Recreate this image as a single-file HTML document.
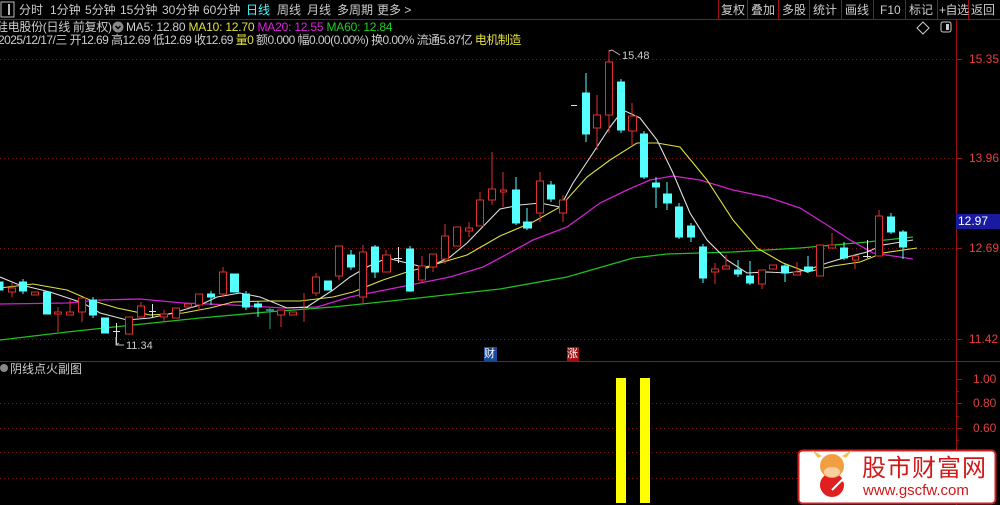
<!DOCTYPE html>
<html><head><meta charset="utf-8"><style>
*{margin:0;padding:0}
body{width:1000px;height:505px;background:#000;overflow:hidden;position:relative;font-family:"Liberation Sans","Noto Sans CJK SC",sans-serif;}
.t{position:absolute;white-space:nowrap;font-size:12px;line-height:14px}
</style></head><body>
<svg width="1000" height="505" style="position:absolute;left:0;top:0" xmlns="http://www.w3.org/2000/svg">
<line x1="0" y1="19.5" x2="1000" y2="19.5" stroke="#a01010"/>
<line x1="956.5" y1="20" x2="956.5" y2="505" stroke="#a01010"/>
<line x1="0" y1="361.5" x2="1000" y2="361.5" stroke="#a01010"/>
<rect x="1" y="2" width="13" height="15" fill="none" stroke="#bbb"/>
<line x1="9" y1="4" x2="9" y2="15" stroke="#bbb" stroke-width="2"/>
<g stroke="#a01010">
<line x1="718.5" y1="0" x2="718.5" y2="19"/><line x1="747.5" y1="0" x2="747.5" y2="19"/><line x1="778.5" y1="0" x2="778.5" y2="19"/><line x1="809.5" y1="0" x2="809.5" y2="19"/><line x1="841.5" y1="0" x2="841.5" y2="19"/><line x1="873.5" y1="0" x2="873.5" y2="19"/><line x1="905.5" y1="0" x2="905.5" y2="19"/><line x1="937.5" y1="0" x2="937.5" y2="19"/><line x1="968.5" y1="0" x2="968.5" y2="19"/>
</g>
<path d="M923 22 L929 28 L923 34 L917 28 Z" fill="none" stroke="#ccc"/>
<rect x="941" y="22" width="10" height="10" rx="2" fill="none" stroke="#ccc"/><rect x="946" y="24" width="3" height="6" fill="#ccc"/>
<g stroke="#7a1818" stroke-dasharray="1,3">
<line x1="0" y1="59.5" x2="956" y2="59.5"/><line x1="0" y1="158.5" x2="956" y2="158.5"/><line x1="0" y1="248.5" x2="956" y2="248.5"/><line x1="0" y1="339.5" x2="956" y2="339.5"/>
<line x1="0" y1="403.5" x2="956" y2="403.5"/><line x1="0" y1="428.5" x2="956" y2="428.5"/><line x1="0" y1="452.5" x2="956" y2="452.5"/><line x1="0" y1="478.5" x2="956" y2="478.5"/>
</g>
<g stroke="#a01010">
<line x1="956" y1="59.5" x2="962" y2="59.5"/><line x1="956" y1="158.5" x2="962" y2="158.5"/><line x1="956" y1="248.5" x2="962" y2="248.5"/><line x1="956" y1="339.5" x2="962" y2="339.5"/>
<line x1="956" y1="379.5" x2="962" y2="379.5"/><line x1="956" y1="403.5" x2="962" y2="403.5"/><line x1="956" y1="428.5" x2="962" y2="428.5"/><line x1="956" y1="391.5" x2="959" y2="391.5"/><line x1="956" y1="416.5" x2="959" y2="416.5"/><line x1="956" y1="440.5" x2="959" y2="440.5"/>
</g>
<polyline fill="none" stroke="#20c020" stroke-width="1.3" points="0,340 67,332 133,325 200,318 267,312 333,307 400,300 500,289 567,277 633,258 667,254 733,252 800,248 867,242 913,237"/>
<polyline fill="none" stroke="#d020d0" stroke-width="1.3" points="0,304 67,303 100,300 140,299 183,303 233,305 283,308 317,307 350,297 400,287 450,277 483,267 500,258 533,240 567,227 600,203 627,190 650,180 673,176 700,180 733,190 767,197 800,208 827,225 850,240 873,253 913,259"/>
<polyline fill="none" stroke="#e0e040" stroke-width="1.1" points="0,288 33,284 67,290 90,300 117,308 150,315 183,313 210,308 233,302 267,301 300,301 333,297 353,292 383,280 407,272 433,265 467,255 500,236 533,222 560,207 587,177 610,160 637,143 657,143 680,147 707,180 733,220 757,248 783,263 807,272 833,266 860,262 883,253 917,248"/>
<polyline fill="none" stroke="#e0e0e0" stroke-width="1.1" points="0,277 17,284 50,292 83,303 100,313 127,320 150,318 173,313 200,305 217,297 240,293 260,297 287,308 307,307 333,290 350,277 367,267 387,258 407,263 427,268 450,257 467,243 500,209 520,205 540,203 560,207 573,183 593,153 610,127 623,110 640,118 657,140 673,173 690,213 707,240 727,260 747,273 767,272 787,273 807,270 827,263 847,257 867,252 883,245 913,240"/>
<g stroke-width="1">
<g stroke="#54ffff" fill="#54ffff">
<rect x="0" y="282" width="3" height="8"/>
<rect x="19.5" y="282" width="7" height="9"/><line x1="23" y1="279" x2="23" y2="294"/>
<rect x="43.5" y="292" width="7" height="22"/>
<rect x="89.5" y="300" width="7" height="15"/><line x1="93" y1="297" x2="93" y2="318"/>
<rect x="101.5" y="318" width="7" height="15"/>
<rect x="207.5" y="294" width="7" height="3"/><line x1="211" y1="291" x2="211" y2="305"/>
<rect x="230.5" y="274" width="8" height="18"/>
<rect x="242.5" y="294" width="7" height="13"/><line x1="246" y1="291" x2="246" y2="310"/>
<rect x="254.5" y="304" width="7" height="3"/><line x1="258" y1="301" x2="258" y2="317"/>
<rect x="324.5" y="281" width="7" height="9"/>
<rect x="347.5" y="255" width="7" height="12"/><line x1="351" y1="250" x2="351" y2="270"/>
<rect x="371.5" y="247" width="7" height="25"/><line x1="375" y1="245" x2="375" y2="278"/>
<rect x="406.5" y="249" width="7" height="42"/><line x1="410" y1="246" x2="410" y2="292"/>
<rect x="512.5" y="190" width="7" height="33"/><line x1="516" y1="177" x2="516" y2="225"/>
<rect x="523.5" y="222" width="8" height="6"/><line x1="527" y1="208" x2="527" y2="230"/>
<rect x="547.5" y="185" width="7" height="14"/><line x1="551" y1="181" x2="551" y2="202"/>
<rect x="582.5" y="93" width="7" height="41"/><line x1="586" y1="73" x2="586" y2="142"/>
<rect x="617.5" y="82" width="7" height="48"/><line x1="621" y1="79" x2="621" y2="133"/>
<rect x="640.5" y="134" width="7" height="43"/><line x1="644" y1="131" x2="644" y2="179"/>
<rect x="652.5" y="183" width="7" height="4"/><line x1="656" y1="177" x2="656" y2="208"/>
<rect x="663.5" y="194" width="8" height="9"/><line x1="667" y1="182" x2="667" y2="210"/>
<rect x="675.5" y="207" width="7" height="30"/><line x1="679" y1="203" x2="679" y2="239"/>
<rect x="687.5" y="226" width="7" height="11"/><line x1="691" y1="223" x2="691" y2="242"/>
<rect x="699.5" y="247" width="7" height="31"/><line x1="703" y1="244" x2="703" y2="283"/>
<rect x="734.5" y="270" width="7" height="4"/><line x1="738" y1="260" x2="738" y2="277"/>
<rect x="746.5" y="276" width="7" height="7"/><line x1="750" y1="261" x2="750" y2="285"/>
<rect x="781.5" y="266" width="7" height="7"/><line x1="785" y1="263" x2="785" y2="282"/>
<rect x="804.5" y="267" width="8" height="4"/><line x1="808" y1="256" x2="808" y2="273"/>
<rect x="840.5" y="248" width="7" height="10"/><line x1="844" y1="242" x2="844" y2="260"/>
<rect x="887.5" y="217" width="7" height="15"/><line x1="891" y1="213" x2="891" y2="234"/>
<rect x="899.5" y="232" width="7" height="15"/><line x1="903" y1="230" x2="903" y2="259"/>
</g>
<g stroke="#e03030" fill="#000">
<rect x="8.5" y="288" width="7" height="4"/><line x1="12" y1="283" x2="12" y2="288"/><line x1="12" y1="292" x2="12" y2="297"/>
<rect x="31.5" y="292" width="7" height="3"/>
<rect x="54.5" y="312" width="7" height="2"/><line x1="58" y1="307" x2="58" y2="312"/><line x1="58" y1="314" x2="58" y2="332"/>
<rect x="66.5" y="312" width="7" height="3"/><line x1="70" y1="300" x2="70" y2="312"/>
<rect x="78.5" y="298" width="7" height="14"/><line x1="82" y1="312" x2="82" y2="322"/>
<rect x="125.5" y="317" width="7" height="17"/>
<rect x="137.5" y="306" width="7" height="11"/><line x1="141" y1="302" x2="141" y2="306"/>
<rect x="160.5" y="314" width="7" height="3"/><line x1="164" y1="310" x2="164" y2="314"/><line x1="164" y1="317" x2="164" y2="321"/>
<rect x="172.5" y="308" width="7" height="10"/>
<rect x="184.5" y="304" width="7" height="3"/>
<rect x="195.5" y="294" width="7" height="11"/><line x1="199" y1="305" x2="199" y2="311"/>
<rect x="219.5" y="272" width="7" height="22"/><line x1="223" y1="267" x2="223" y2="272"/><line x1="223" y1="294" x2="223" y2="297"/>
<rect x="277.5" y="310" width="7" height="5"/><line x1="281" y1="315" x2="281" y2="327"/>
<rect x="289.5" y="312" width="7" height="3"/>
<rect x="312.5" y="277" width="7" height="16"/><line x1="316" y1="273" x2="316" y2="277"/><line x1="316" y1="293" x2="316" y2="296"/>
<rect x="335.5" y="246" width="7" height="30"/><line x1="339" y1="276" x2="339" y2="280"/>
<rect x="359.5" y="252" width="7" height="45"/><line x1="363" y1="245" x2="363" y2="252"/><line x1="363" y1="297" x2="363" y2="303"/>
<rect x="382.5" y="255" width="8" height="17"/><line x1="386" y1="250" x2="386" y2="255"/>
<rect x="418.5" y="266" width="7" height="14"/><line x1="422" y1="256" x2="422" y2="266"/><line x1="422" y1="280" x2="422" y2="283"/>
<rect x="429.5" y="254" width="7" height="13"/><line x1="433" y1="267" x2="433" y2="272"/>
<rect x="441.5" y="236" width="7" height="23"/><line x1="445" y1="224" x2="445" y2="236"/><line x1="445" y1="259" x2="445" y2="264"/>
<rect x="453.5" y="227" width="7" height="19"/>
<rect x="465.5" y="228" width="7" height="3"/><line x1="469" y1="222" x2="469" y2="228"/><line x1="469" y1="231" x2="469" y2="237"/>
<rect x="476.5" y="200" width="7" height="26"/><line x1="480" y1="192" x2="480" y2="200"/>
<rect x="488.5" y="189" width="7" height="11"/><line x1="492" y1="152" x2="492" y2="189"/><line x1="492" y1="200" x2="492" y2="205"/>
<rect x="500.5" y="190" width="6" height="2"/><line x1="503" y1="172" x2="503" y2="190"/><line x1="503" y1="192" x2="503" y2="207"/>
<rect x="536.5" y="181" width="7" height="32"/><line x1="540" y1="172" x2="540" y2="181"/><line x1="540" y1="213" x2="540" y2="222"/>
<rect x="559.5" y="200" width="7" height="13"/><line x1="563" y1="195" x2="563" y2="200"/><line x1="563" y1="213" x2="563" y2="222"/>
<rect x="593.5" y="115" width="7" height="13"/><line x1="597" y1="95" x2="597" y2="115"/><line x1="597" y1="128" x2="597" y2="150"/>
<rect x="605.5" y="62" width="7" height="53"/><line x1="609" y1="50" x2="609" y2="62"/><line x1="609" y1="115" x2="609" y2="133"/>
<rect x="628.5" y="116" width="8" height="15"/><line x1="632" y1="103" x2="632" y2="116"/><line x1="632" y1="131" x2="632" y2="145"/>
<rect x="711.5" y="269" width="7" height="3"/><line x1="715" y1="263" x2="715" y2="269"/><line x1="715" y1="272" x2="715" y2="284"/>
<rect x="722.5" y="266" width="7" height="3"/><line x1="726" y1="255" x2="726" y2="266"/>
<rect x="758.5" y="270" width="7" height="14"/><line x1="762" y1="284" x2="762" y2="289"/>
<rect x="769.5" y="265" width="7" height="4"/>
<rect x="793.5" y="272" width="7" height="3"/><line x1="797" y1="262" x2="797" y2="272"/>
<rect x="816.5" y="245" width="7" height="31"/>
<rect x="828.5" y="245" width="7" height="3"/><line x1="832" y1="233" x2="832" y2="245"/>
<rect x="852.5" y="256" width="6" height="4"/><line x1="855" y1="260" x2="855" y2="269"/>
<rect x="875.5" y="216" width="7" height="40"/><line x1="879" y1="210" x2="879" y2="216"/>
</g>
<g stroke="#e0e0e0">
<line x1="113" y1="331.5" x2="120" y2="331.5"/><line x1="116.5" y1="323" x2="116.5" y2="345"/>
<line x1="149" y1="311.5" x2="156" y2="311.5"/><line x1="152.5" y1="304" x2="152.5" y2="317"/>
<line x1="394" y1="258.5" x2="402" y2="258.5"/><line x1="398.5" y1="247" x2="398.5" y2="263"/>
<line x1="571" y1="105.5" x2="577" y2="105.5"/>
<line x1="863" y1="256.5" x2="871" y2="256.5"/><line x1="867.5" y1="240" x2="867.5" y2="258"/>
</g>
<line x1="266" y1="310" x2="274" y2="310" stroke="#54ffff"/><line x1="270" y1="308" x2="270" y2="329" stroke="#30a080"/>
<line x1="300" y1="307.5" x2="308" y2="307.5" stroke="#e0e0e0"/><line x1="304" y1="293" x2="304" y2="322" stroke="#e03030"/>
</g>
<path d="M116 337 V345 H124 M116 345 L119 343" fill="none" stroke="#bbb"/>
<path d="M609 51 L612 50 L620 55" fill="none" stroke="#bbb"/>
<rect x="616" y="378" width="10" height="125" fill="#ffff00"/>
<rect x="640" y="378" width="10" height="125" fill="#ffff00"/>
<circle cx="4" cy="368" r="4" fill="#888"/>
<circle cx="118" cy="27" r="5.5" fill="#888"/><path d="M115.5 26 L118 28.5 L120.5 26" stroke="#000" fill="none" stroke-width="1.5"/>
<rect x="798.5" y="450.5" width="197" height="53" rx="4" fill="#fff" stroke="#d02020" stroke-width="2"/>
<circle cx="832" cy="485" r="12" fill="#e02020"/>
<circle cx="832" cy="466" r="12" fill="#f0a040"/>
<ellipse cx="832" cy="472" rx="8" ry="5" fill="#f8d0a0"/>
<path d="M818 458 L812 450 L822 456 Z M846 458 L852 450 L842 456 Z" fill="#f0c050"/>
<path d="M832 490 L842 480 L846 483 L852 474" fill="none" stroke="#fff" stroke-width="2"/>
</svg>
<div class="t" style="left:19px;top:3px;color:#ccc">分时</div>
<div class="t" style="left:50px;top:3px;color:#ccc">1分钟</div>
<div class="t" style="left:85px;top:3px;color:#ccc">5分钟</div>
<div class="t" style="left:120px;top:3px;color:#ccc">15分钟</div>
<div class="t" style="left:162px;top:3px;color:#ccc">30分钟</div>
<div class="t" style="left:203px;top:3px;color:#ccc">60分钟</div>
<div class="t" style="left:246px;top:3px;color:#4ff">日线</div>
<div class="t" style="left:277px;top:3px;color:#ccc">周线</div>
<div class="t" style="left:307px;top:3px;color:#ccc">月线</div>
<div class="t" style="left:337px;top:3px;color:#ccc">多周期</div>
<div class="t" style="left:377px;top:3px;color:#ccc">更多 &gt;</div>
<div class="t" style="left:721px;top:3px;color:#ccc">复权</div>
<div class="t" style="left:751px;top:3px;color:#ccc">叠加</div>
<div class="t" style="left:782px;top:3px;color:#ccc">多股</div>
<div class="t" style="left:813px;top:3px;color:#ccc">统计</div>
<div class="t" style="left:845px;top:3px;color:#ccc">画线</div>
<div class="t" style="left:880px;top:3px;color:#ccc">F10</div>
<div class="t" style="left:909px;top:3px;color:#ccc">标记</div>
<div class="t" style="left:939px;top:3px;color:#ccc;letter-spacing:-0.5px">+自选</div>
<div class="t" style="left:971px;top:3px;color:#ccc">返回</div>
<div class="t" style="left:-4px;top:20px;color:#ccc;letter-spacing:-0.3px">硅电股份(日线 前复权)</div>
<div class="t" style="left:126px;top:20px;color:#ccc;letter-spacing:-0.2px">MA5: 12.80 <span style="color:#e0e040">MA10: 12.70</span> <span style="color:#e020e0">MA20: 12.55</span> <span style="color:#20d020">MA60: 12.84</span></div>
<div class="t" style="left:-2px;top:33px;color:#ccc;letter-spacing:-0.55px">2025/12/17/三 开12.69 高12.69 低12.69 收12.69 <span style="color:#e0e040">量0</span> 额0.000 幅0.00(0.00%) 换0.00% 流通5.87亿 <span style="color:#e0e040">电机制造</span></div>
<div class="t" style="left:622px;top:49px;color:#ccc;font-size:11px">15.48</div>
<div class="t" style="left:126px;top:339px;color:#ccc;font-size:11px">11.34</div>
<div class="t" style="left:484px;top:347px;width:13px;background:#1a4a9a;color:#fff;font-size:11px">财</div>
<div class="t" style="left:567px;top:347px;width:12px;background:#a01010;color:#fff;font-size:11px">涨</div>
<div class="t" style="left:10px;top:362px;color:#ccc">阴线点火副图</div>
<div class="t" style="left:969px;top:52px;color:#e04040">15.35</div>
<div class="t" style="left:969px;top:151px;color:#e04040">13.96</div>
<div class="t" style="left:956px;top:214px;width:44px;height:15px;background:#1a1aa0;color:#fff;padding-left:2px">12.97</div>
<div class="t" style="left:969px;top:241px;color:#e04040">12.69</div>
<div class="t" style="left:969px;top:332px;color:#e04040">11.42</div>
<div class="t" style="left:973px;top:372px;color:#e04040">1.00</div>
<div class="t" style="left:973px;top:396px;color:#e04040">0.80</div>
<div class="t" style="left:973px;top:421px;color:#e04040">0.60</div>
<div class="t" style="left:862px;top:456px;color:#d01818;font-size:24px;line-height:26px;letter-spacing:1px">股市财富网</div>
<div class="t" style="left:863px;top:483px;color:#d01818;font-size:15px;line-height:16px">www.gscfw.com</div>
</body></html>
